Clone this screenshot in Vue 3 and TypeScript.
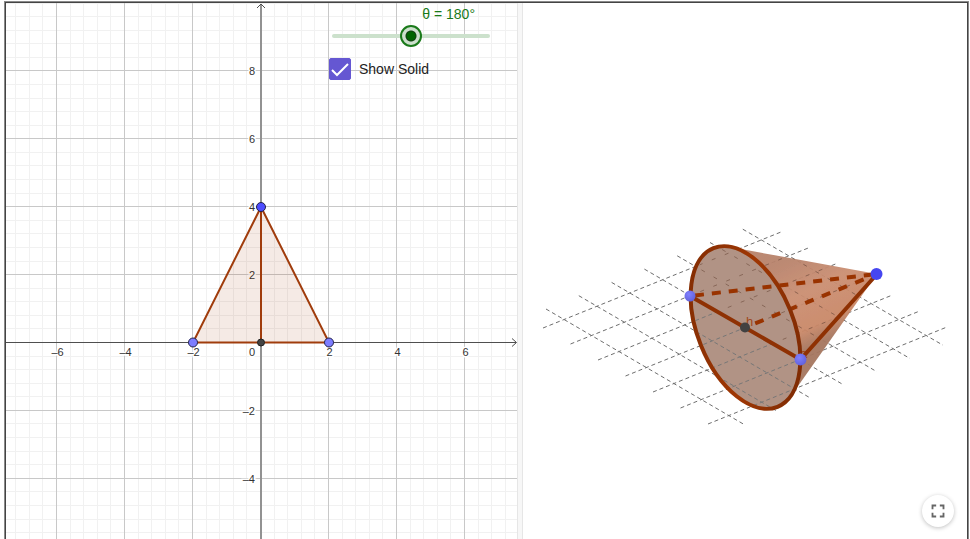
<script setup lang="ts">
import { computed, ref } from 'vue'

interface Tick { value: number; at: number }
interface Segment { x1: number; y1: number; x2: number; y2: number }

const angle = ref(180)
const showSolid = ref(true)

const origin = { x: 255, y: 339.5 }
const toX = (v: number) => Math.round(origin.x + v * 34) - 0.5
const toY = (v: number) => Math.floor(origin.y - v * 33.95) + 0.5

const minorX: number[] = []
const minorY: number[] = []
for (let i = -18; i <= 19; i++) minorX.push(toX(i * 0.4))
for (let i = -30; i <= 25; i++) minorY.push(toY(i * 0.4))

const ticksX: Tick[] = [-6, -4, -2, 2, 4, 6].map((value) => ({ value, at: toX(value) }))
const ticksY: Tick[] = [8, 6, 4, 2, -2, -4].map((value) => ({ value, at: toY(value) }))
const label = (v: number) => (v < 0 ? `–${-v}` : `${v}`)

const plane: Segment[] = []
for (let i = 0; i < 7; i++) {
  plane.push({ x1: 20 + i * 27.5, y1: 325 + i * 16, x2: 258 + i * 27.5, y2: 229 + i * 15.9 })
  plane.push({ x1: 23 + i * 32.8, y1: 306 - i * 13.3, x2: 222 + i * 33, y2: 422 - i * 13.3 })
}

const angleLabel = computed(() => `θ = ${angle.value}°`)
</script>

<template>
  <main class="applet">
    <section class="view" aria-label="Graphics">
      <svg class="drawing" viewBox="0 0 511 500">
        <g class="minor">
          <line v-for="x in minorX" :key="`mx${x}`" :x1="x" :x2="x" y1="0" y2="900" />
          <line v-for="y in minorY" :key="`my${y}`" :y1="y" :y2="y" x1="0" x2="512" />
        </g>
        <g class="major">
          <line v-for="t in ticksX" :key="`x${t.value}`" :x1="t.at" :x2="t.at" y1="0" y2="900" />
          <line v-for="t in ticksY" :key="`y${t.value}`" :y1="t.at" :y2="t.at" x1="0" x2="512" />
        </g>
        <path class="axis" d="M0 339.5H510M506 335.5L510.500 339.500L506 343.500" />
        <path class="axis vertical" d="M255 1V900" />
        <path class="axis" d="M251 5L255 1L259 5" />
        <g class="labels">
          <text v-for="t in ticksX" :key="`lx${t.value}`" :x="t.at + 1" y="353" text-anchor="middle">{{ label(t.value) }}</text>
          <text v-for="t in ticksY" :key="`ly${t.value}`" x="249" :y="t.at + 4" text-anchor="end">{{ label(t.value) }}</text>
          <text x="249" y="353" text-anchor="end">0</text>
        </g>
        <path class="triangle" d="M187 339.500L255 204L323 339.500Z" />
        <path class="edge" d="M255 204V339.500" />
        <circle class="point light" cx="187" cy="339.500" r="4.500" />
        <circle class="point light" cx="323" cy="339.500" r="4.500" />
        <circle class="point blue" cx="255" cy="204" r="4.500" />
        <circle class="point dark" cx="255" cy="339.500" r="3.500" />
      </svg>
      <div class="controls">
        <label class="angle-label" for="angle">{{ angleLabel }}</label>
        <input id="angle" v-model.number="angle" class="slider" type="range" min="0" max="360" />
        <label class="toggle">
          <span class="box">
            <input v-model="showSolid" type="checkbox" />
            <svg v-if="showSolid" viewBox="0 0 22 22" aria-hidden="true"><path d="M3 12L8 17L19 6" /></svg>
          </span>
          <span>Show Solid</span>
        </label>
      </div>
    </section>
    <div class="splitter"></div>
    <section class="view" aria-label="3D Graphics">
      <svg class="drawing" viewBox="0 0 444 430">
        <defs>
          <linearGradient id="side" gradientUnits="userSpaceOnUse" x1="280" y1="250" x2="318" y2="330">
            <stop offset="0" stop-color="#b8836c" />
            <stop offset="0.400" stop-color="#ca8e72" />
            <stop offset="0.800" stop-color="#c98868" />
            <stop offset="1" stop-color="#a5765f" />
          </linearGradient>
          <linearGradient id="rim" x1="0" y1="0" x2="1" y2="1">
            <stop offset="0" stop-color="#7c2a02" />
            <stop offset="0.500" stop-color="#9f3704" />
            <stop offset="1" stop-color="#742703" />
          </linearGradient>
          <radialGradient id="ball" cx="0.400" cy="0.350" r="0.700">
            <stop offset="0" stop-color="#8080ff" />
            <stop offset="1" stop-color="#6060d8" />
          </radialGradient>
          <clipPath id="base-clip">
            <ellipse cx="222.500" cy="324.500" rx="48" ry="85.500" transform="rotate(-22 222.500 324.500)" />
          </clipPath>
          <clipPath id="front-clip"><path d="M150 282L300 370V420H150Z" /></clipPath>
          <clipPath id="back-clip"><path d="M167 293L277 356L354 271L208 244Q176 240 167 293Z" /></clipPath>
        </defs>
        <g class="plane">
          <line v-for="(s, i) in plane" :key="i" :x1="s.x1" :y1="s.y1" :x2="s.x2" :y2="s.y2" />
        </g>
        <g v-if="showSolid">
          <path fill="url(#side)" fill-opacity="0.950" d="M207 244L354 271L268 393L222 325Z" />
          <ellipse class="base" cx="222.500" cy="324.500" rx="48" ry="85.500" transform="rotate(-22 222.500 324.500)" />
          <g clip-path="url(#base-clip)">
            <g class="plane front" clip-path="url(#front-clip)">
              <line v-for="(s, i) in plane" :key="i" :x1="s.x1" :y1="s.y1" :x2="s.x2" :y2="s.y2" />
            </g>
          </g>
          <g class="plane back" clip-path="url(#back-clip)">
            <line v-for="(s, i) in plane" :key="i" :x1="s.x1" :y1="s.y1" :x2="s.x2" :y2="s.y2" />
          </g>
        </g>
        <path class="hidden-edge upper" d="M167 293L354 271" />
        <path class="hidden-edge lower" d="M222 324.500L354 271" />
        <text class="name" x="223" y="323">h</text>
        <text class="name" x="277" y="355">a</text>
        <path class="solid-edge" d="M167 293L277.500 356.500L354 271" />
        <ellipse class="rim" cx="222.500" cy="324.500" rx="48" ry="85.500" transform="rotate(-22 222.500 324.500)" />
        <circle cx="167" cy="293" r="5.500" fill="url(#ball)" />
        <circle cx="277.500" cy="356.500" r="6" fill="url(#ball)" />
        <circle cx="222" cy="324.500" r="5" fill="#414141" />
        <circle cx="353.500" cy="271" r="6" fill="#4646f0" />
      </svg>
      <button class="fullscreen" type="button" aria-label="Fullscreen">
        <svg viewBox="0 0 24 24"><path d="M7 14H5v5h5v-2H7v-3zM5 10h2V7h3V5H5v5zm12 7h-3v2h5v-5h-2v3zM14 5v2h3v3h2V5h-5z" /></svg>
      </button>
    </section>
  </main>
</template>

<style>
body { margin: 0; overflow: hidden; background: #fff; }
</style>

<style scoped>
.applet {
  box-sizing: border-box;
  height: 100vh;
  margin: 1px 1px 0 4px;
  padding: 1px 1px 0;
  border: 1px solid #8a8a8a;
  border-bottom: 0;
  background: #444;
  display: grid;
  grid-template-columns: 511fr 6px 444fr;
  font-family: "Liberation Sans", Arial, sans-serif;
}
.view { position: relative; overflow: hidden; min-width: 0; background: #fff; }
.drawing { display: block; width: 100%; height: auto; overflow: visible; }
.splitter { box-sizing: border-box; background: #f7f7f7; border: solid #e6e6e6; border-width: 0 1px; }
.minor line { stroke: #f1f1f1; stroke-width: 1; }
.major line { stroke: #c8c8c8; stroke-width: 1; }
.axis { fill: none; stroke: #4f4f4f; stroke-width: 1; }
.vertical { stroke: #929292; stroke-width: 2; }
.labels text { font: 11px "Liberation Sans", Arial, sans-serif; fill: #333; stroke: #fff; stroke-width: 3; paint-order: stroke; }
.triangle { fill: rgba(153, 51, 0, 0.1); stroke: #a03c0c; stroke-width: 2; }
.edge { stroke: #a03c0c; stroke-width: 2; }
.point { stroke: #22224a; stroke-width: 1; }
.light { fill: #7d7dff; }
.blue { fill: #4d4dff; }
.dark { fill: #444; stroke: #222; }
.controls {
  position: absolute;
  top: 3px;
  left: 323px;
  width: 164px;
  display: flex;
  flex-direction: column;
  font-size: 14px;
  line-height: 16px;
}
.angle-label { align-self: flex-end; margin-right: 18px; color: #1a7a1a; }
.slider { appearance: none; width: 158px; height: 22px; margin: 3px 3px 11px; background: transparent; }
.slider::-webkit-slider-runnable-track { height: 4px; border-radius: 2px; background: #cce1cc; }
.slider::-webkit-slider-thumb {
  appearance: none;
  box-sizing: border-box;
  width: 22px;
  height: 22px;
  margin-top: -9px;
  border: 2px solid #1a7a1a;
  border-radius: 50%;
  background: radial-gradient(circle, #006400 4px, #123f12 5px, #cce0cc 6px);
}
.toggle { display: flex; align-items: center; gap: 8px; color: #222; }
.box { position: relative; width: 22px; height: 22px; }
.box input { appearance: none; display: block; width: 22px; height: 22px; margin: 0; border: 1px solid #6557d2; border-radius: 2px; background: #fff; }
.box input:checked { background: #6557d2; }
.box svg { position: absolute; inset: 0; width: 22px; height: 22px; pointer-events: none; }
.box path { fill: none; stroke: #fff; stroke-width: 2; }
.plane line { stroke: #6e6e6e; stroke-width: 1; stroke-dasharray: 4 3; }
.front line { stroke: #777; }
.back { opacity: 0.6; }
.back line { stroke: #6b4a3c; stroke-dasharray: 4 10; }
.base { fill: #b19385; }
.rim { fill: none; stroke: url(#rim); stroke-width: 4; }
.solid-edge { fill: none; stroke: #8f3103; stroke-width: 4; }
.hidden-edge { fill: none; stroke: #993300; stroke-width: 4; }
.upper { stroke-dasharray: 9 8; stroke-dashoffset: -5; }
.lower { stroke-dasharray: 9 9; stroke-dashoffset: -11; }
.name { font: 13px "Liberation Sans", Arial, sans-serif; fill: #993300; fill-opacity: 0.8; }
.fullscreen {
  position: absolute;
  right: 13px;
  bottom: 13px;
  width: 32px;
  height: 32px;
  padding: 5px;
  border: 0;
  border-radius: 50%;
  background: #fff;
  box-shadow: 0 1px 4px rgba(0, 0, 0, 0.25);
}
.fullscreen svg { display: block; width: 22px; height: 22px; fill: #666; }
</style>
